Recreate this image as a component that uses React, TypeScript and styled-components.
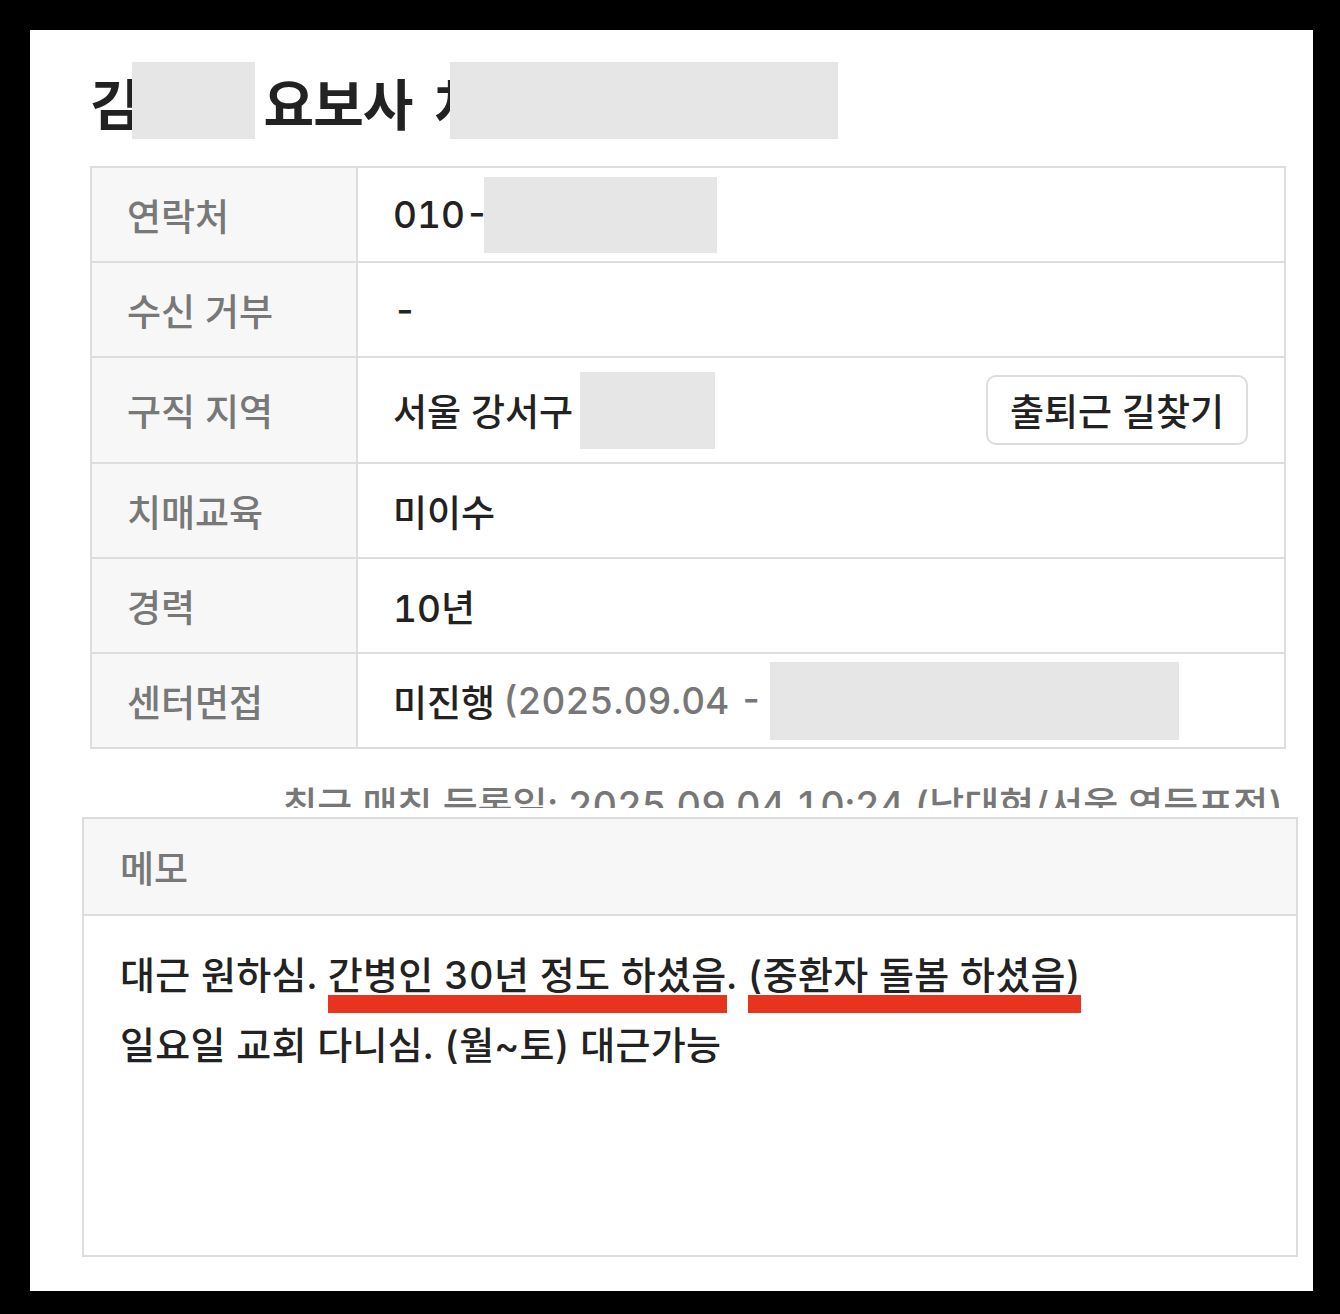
import styled, { createGlobalStyle } from 'styled-components';

const GlobalStyle = createGlobalStyle`
  html, body {
    margin: 0;
    padding: 0;
    background: #000;
  }
  body {
    font-family: Inter, 'Noto Sans CJK KR', 'Noto Sans', sans-serif;
    font-feature-settings: 'tnum';
    color: #222;
  }
`;

const rows = [
  { label: '연락처', kind: 'phone' },
  { label: '수신 거부', kind: 'plain', value: '-' },
  { label: '구직 지역', kind: 'area' },
  { label: '치매교육', kind: 'plain', value: '미이수' },
  { label: '경력', kind: 'plain', value: '10년' },
  { label: '센터면접', kind: 'interview' },
];

const App = () => {
  const renderValue = (row: (typeof rows)[number]) => {
    if (row.kind === 'phone') {
      return (
        <>
          <span>010-</span>
          <Redact $w={233} $h={76} $ml={-5} />
        </>
      );
    }
    if (row.kind === 'area') {
      return (
        <>
          <span>서울 강서구</span>
          <Redact $w={135} $h={77} $ml={7} />
          <RouteButton>출퇴근 길찾기</RouteButton>
        </>
      );
    }
    if (row.kind === 'interview') {
      return (
        <>
          <span>미진행</span>
          <Muted>(2025.09.04 -</Muted>
          <Redact $w={409} $h={78} $ml={7} />
        </>
      );
    }
    return <span>{row.value}</span>;
  };

  return (
    <Page>
      <GlobalStyle />
      <Panel>
        <Title>
          <span>김</span>
          <Redact $w={123} $h={77} $ml={-8} />
          <TitleName>요보사</TitleName>
          <TitleName>차</TitleName>
          <Redact $w={388} $h={77} $ml={-34} />
        </Title>

        <InfoTable>
          {rows.map((row) => (
            <Row key={row.label} $tall={row.kind === 'area'}>
              <Label>{row.label}</Label>
              <Value>{renderValue(row)}</Value>
            </Row>
          ))}
        </InfoTable>

        <MatchClip>
          <MatchText>최근 매칭 등록일: 2025.09.04 10:24 (남대현/서울 영등포점)</MatchText>
        </MatchClip>

        <Memo>
          <MemoHeader>메모</MemoHeader>
          <MemoBody>
            <p>
              대근 원하심. <Marked>간병인 30년 정도 하셨음</Marked>.{' '}
              <Marked>(중환자 돌봄 하셨음)</Marked>
            </p>
            <p>일요일 교회 다니심. (월~토) 대근가능</p>
          </MemoBody>
        </Memo>
      </Panel>
    </Page>
  );
};

const Page = styled.div`
  width: 1340px;
  min-height: 1314px;
  background: #000;
  padding: 30px 27px 23px 30px;
  box-sizing: border-box;
`;

const Panel = styled.div`
  background: #fff;
  height: 1261px;
  padding-top: 32px;
  box-sizing: border-box;
`;

const Redact = styled.div<{ $w: number; $h: number; $ml?: number }>`
  flex: none;
  width: ${({ $w }) => $w}px;
  height: ${({ $h }) => $h}px;
  margin-left: ${({ $ml }) => $ml ?? 0}px;
  background: #e6e6e6;
`;

const Title = styled.h1`
  display: flex;
  align-items: center;
  height: 77px;
  margin: 0 0 0 60px;
  font-size: 55px;
  font-weight: 700;
  color: #222;
  letter-spacing: -1px;
`;

const TitleName = styled.span`
  margin-left: 9px;
  &:nth-of-type(3) {
    margin-left: 22px;
  }
`;

const InfoTable = styled.div`
  margin: 27px 27px 0 60px;
  border: 2px solid #dddddd;
`;

const Row = styled.div<{ $tall?: boolean }>`
  display: flex;
  min-height: ${({ $tall }) => ($tall ? 104 : 93)}px;
  & + & {
    border-top: 2px solid #dddddd;
  }
`;

const Label = styled.div`
  flex: none;
  width: 266px;
  box-sizing: border-box;
  display: flex;
  align-items: center;
  padding-left: 35px;
  background: #f7f7f7;
  border-right: 2px solid #dddddd;
  font-size: 37px;
  font-weight: 500;
  color: #787878;
`;

const Value = styled.div`
  flex: 1;
  display: flex;
  align-items: center;
  padding: 0 36px 0 35px;
  font-size: 37px;
  font-weight: 500;
  color: #222;
`;

const Muted = styled.span`
  margin-left: 8px;
  color: #777;
`;

const RouteButton = styled.button`
  margin-left: auto;
  height: 70px;
  padding: 0 22px;
  background: #fff;
  border: 2px solid #dddddd;
  border-radius: 10px;
  font-family: inherit;
  font-size: 37px;
  font-weight: 500;
  color: #222;
`;

const MatchClip = styled.div`
  height: 59px;
  overflow: hidden;
  margin: 0 30px 0 60px;
  text-align: right;
`;

const MatchText = styled.div`
  padding-top: 38px;
  font-size: 38px;
  line-height: 37px;
  font-weight: 500;
  color: #777;
  white-space: nowrap;
`;

const Memo = styled.section`
  margin: 9px 15px 0 52px;
  height: 440px;
  box-sizing: border-box;
  border: 2px solid #dddddd;
`;

const MemoHeader = styled.div`
  height: 95px;
  display: flex;
  align-items: center;
  padding-left: 36px;
  background: #f7f7f7;
  border-bottom: 2px solid #dddddd;
  font-size: 37px;
  font-weight: 500;
  color: #787878;
`;

const MemoBody = styled.div`
  padding: 24px 36px 0;
  font-size: 38px;
  font-weight: 500;
  color: #222;
  letter-spacing: 0.3px;

  p {
    margin: 0;
    line-height: 70px;
  }
`;

const Marked = styled.span`
  position: relative;
  &::after {
    content: '';
    position: absolute;
    left: 0;
    right: 0;
    bottom: -15px;
    height: 18px;
    background: #e8341f;
  }
`;

export default App;
